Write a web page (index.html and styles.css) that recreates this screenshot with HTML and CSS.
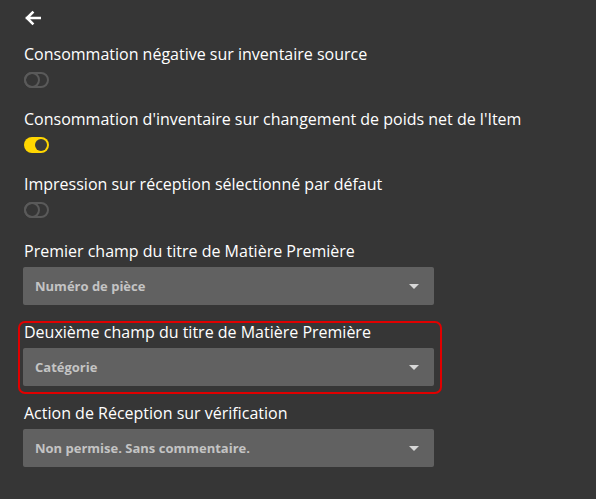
FILE: index.html
```html
<!DOCTYPE html>
<html lang="fr">
<head>
<meta charset="utf-8">
<link rel="stylesheet" href="styles.css">
</head>
<body>
<div class="page">
  <div class="back">
    <svg width="17" height="16" viewBox="0 0 17 16"><path d="M16 8H3M8.5 2.5L3 8l5.5 5.5" fill="none" stroke="#fff" stroke-width="2.6" stroke-linecap="square"/></svg>
  </div>

  <div class="field">
    <div class="label">Consommation négative sur inventaire source</div>
    <div class="toggle off"><span class="knob"></span></div>
  </div>

  <div class="field">
    <div class="label">Consommation d'inventaire sur changement de poids net de l'Item</div>
    <div class="toggle on"><span class="knob"></span></div>
  </div>

  <div class="field">
    <div class="label">Impression sur réception sélectionné par défaut</div>
    <div class="toggle off"><span class="knob"></span></div>
  </div>

  <div class="field select-field">
    <div class="label">Premier champ du titre de Matière Première</div>
    <div class="select"><span>Numéro de pièce</span><span class="caret"></span></div>
  </div>

  <div class="field select-field highlighted">
    <div class="label">Deuxième champ du titre de Matière Première</div>
    <div class="select"><span>Catégorie</span><span class="caret"></span></div>
  </div>

  <div class="field select-field">
    <div class="label">Action de Réception sur vérification</div>
    <div class="select"><span>Non permise. Sans commentaire.</span><span class="caret"></span></div>
  </div>
</div>
</body>
</html>
```

FILE: styles.css
```css
html, body {
  margin: 0;
  padding: 0;
  background: #363636;
  height: 100%;
}
body {
  font-family: "Open Sans", "Liberation Sans", sans-serif;
  color: #fff;
}
.page {
  padding: 10px 0 0 24px;
  display: flex;
  flex-direction: column;
}
.back {
  height: 16px;
  margin-bottom: 17px;
}
.back svg { display: block; }
.field {
  display: flex;
  flex-direction: column;
  align-items: flex-start;
  margin-bottom: 20px;
}
.label {
  font-size: 16px;
  line-height: 22px;
  margin-bottom: 7px;
}
.toggle {
  position: relative;
  width: 25px;
  height: 16px;
  border-radius: 8px;
  box-sizing: border-box;
}
.toggle.off {
  border: 2px solid #5a5a5a;
}
.toggle.off .knob {
  position: absolute;
  left: -2px;
  top: -2px;
  width: 16px;
  height: 16px;
  box-sizing: border-box;
  border: 2px solid #5a5a5a;
  border-radius: 50%;
}
.toggle.on {
  background: #ffd600;
}
.toggle.on .knob {
  position: absolute;
  right: 2px;
  top: 2px;
  width: 12px;
  height: 12px;
  border-radius: 50%;
  background: #3a3a3a;
}
.select-field {
  margin-bottom: 16px;
  width: 410px;
  align-items: stretch;
}
.field:not(.select-field) + .select-field {
  margin-top: 2px;
}
.select-field .label {
  margin-bottom: 5px;
}
.select {
  margin-left: -1px;
  height: 38px;
  background: #616161;
  border-radius: 2px;
  display: flex;
  align-items: center;
  justify-content: space-between;
  padding: 0 15px 0 12px;
  font-size: 13px;
  font-weight: 700;
  color: #c4c4c4;
}
.caret {
  width: 0;
  height: 0;
  border-left: 5px solid transparent;
  border-right: 5px solid transparent;
  border-top: 5px solid #d8d8d8;
}
.highlighted {
  position: relative;
}
.highlighted::before {
  content: "";
  position: absolute;
  left: -6px;
  width: 424px;
  top: 0;
  bottom: -8px;
  box-sizing: border-box;
  border: 2px solid #e00000;
  border-radius: 7px;
}
```
